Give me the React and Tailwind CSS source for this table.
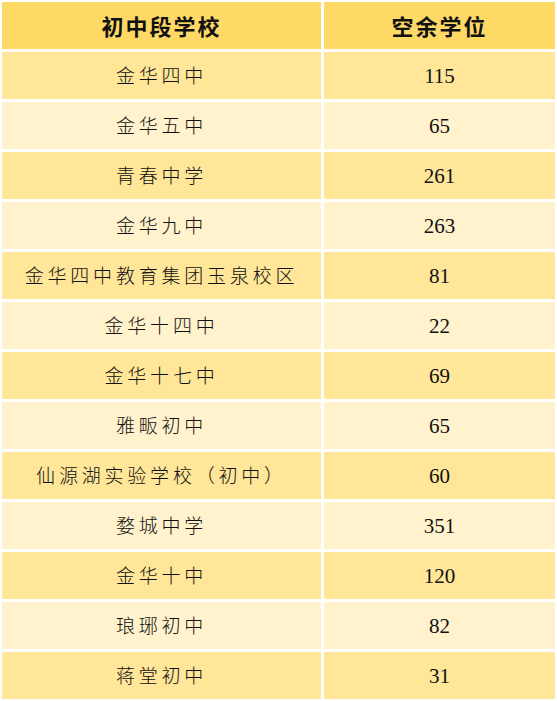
import React from "react";

const rows = [
  ["金华四中", "115"],
  ["金华五中", "65"],
  ["青春中学", "261"],
  ["金华九中", "263"],
  ["金华四中教育集团玉泉校区", "81"],
  ["金华十四中", "22"],
  ["金华十七中", "69"],
  ["雅畈初中", "65"],
  ["仙源湖实验学校（初中）", "60"],
  ["婺城中学", "351"],
  ["金华十中", "120"],
  ["琅琊初中", "82"],
  ["蒋堂初中", "31"],
];

const App = () => {
  return (
    <div className="w-[557px] h-[701px] bg-white p-[2px] grid grid-cols-[319px_231px] auto-rows-[47px] gap-[3px] text-[#111]">
      <div className="bg-[#ffd966] flex items-center justify-center font-bold text-[22px] tracking-[2px] font-['Noto_Sans_CJK_SC',sans-serif]">
        初中段学校
      </div>
      <div className="bg-[#ffd966] flex items-center justify-center font-bold text-[22px] tracking-[2px] font-['Noto_Sans_CJK_SC',sans-serif]">
        空余学位
      </div>

      {rows.map(([name, seats], i) => {
        const bg = i % 2 === 0 ? "bg-[#ffe699]" : "bg-[#fff2cc]";
        return (
          <React.Fragment key={name}>
            <div
              className={`${bg} flex items-center justify-center pt-[3px] text-[19px] font-light tracking-[3.8px] font-['Liberation_Serif','Noto_Sans_CJK_SC',serif]`}
            >
              {name}
            </div>
            <div
              className={`${bg} flex items-center justify-center pt-[2px] text-[21px] font-['Liberation_Serif',serif]`}
            >
              {seats}
            </div>
          </React.Fragment>
        );
      })}
    </div>
  );
};

export default App;
